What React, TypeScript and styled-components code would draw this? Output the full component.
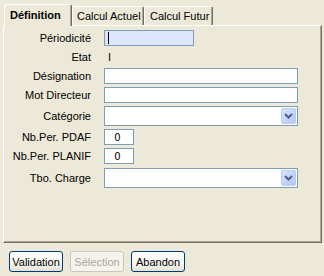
import React from "react";
import styled, { createGlobalStyle } from "styled-components";

const Global = createGlobalStyle`
  html, body { margin: 0; padding: 0; background: #ece9d8; }
  body { font-family: "Liberation Sans", Arial, sans-serif; font-size: 11px; color: #000; }
`;

const Window = styled.div`
  width: 324px;
  height: 276px;
  box-sizing: border-box;
  padding: 4px 2px 0 3px;
  background: #ece9d8;
  display: flex;
  flex-direction: column;
`;

const TabRow = styled.div`
  display: flex;
  align-items: flex-end;
  height: 21px;
  padding-left: 1px;
`;

const Tab = styled.div<{ $active?: boolean; $w: number; $pl: number }>`
  position: relative;
  z-index: ${(p) => (p.$active ? 2 : 1)};
  box-sizing: border-box;
  width: ${(p) => p.$w}px;
  height: ${(p) => (p.$active ? "22px" : "19px")};
  margin-bottom: ${(p) => (p.$active ? "-1px" : "0")};
  padding: 0 0 ${(p) => (p.$active ? "2px" : "0")} ${(p) => p.$pl}px;
  display: flex;
  align-items: center;
  background: #ece9d8;
  border-top: 1px solid #fff;
  border-left: 1px solid #fff;
  border-right: 1px solid #716f64;
  box-shadow: inset -1px 0 0 #aca899;
  border-radius: 2px 2px 0 0;
  font-weight: ${(p) => (p.$active ? "bold" : "normal")};
  white-space: nowrap;
`;

const Panel = styled.div`
  box-sizing: border-box;
  height: 218px;
  width: 319px;
  border-top: 1px solid #fff;
  border-left: 1px solid #fff;
  border-right: 1px solid #716f64;
  border-bottom: 1px solid #716f64;
  box-shadow: inset -1px -1px 0 #aca899;
  padding: 4px 0 0 0;
`;

const Form = styled.div`
  display: grid;
  grid-template-columns: 87px 194px;
  column-gap: 13px;
  row-gap: 3px;
  align-items: center;
`;

const Label = styled.div`
  text-align: right;
  white-space: nowrap;
`;

const Field = styled.div<{ $h: number }>`
  height: ${(p) => p.$h}px;
  display: flex;
  align-items: center;
`;

const TextBox = styled.div<{ $w?: number; $focus?: boolean; $center?: boolean }>`
  box-sizing: border-box;
  width: ${(p) => (p.$w ? `${p.$w}px` : "100%")};
  height: 16px;
  border: 1px solid #7f9db9;
  background: ${(p) => (p.$focus ? "#dce5fb" : "#fff")};
  display: flex;
  align-items: center;
  justify-content: ${(p) => (p.$center ? "center" : "flex-start")};
  padding-left: ${(p) => (p.$center ? "0" : "3px")};
  padding-right: ${(p) => (p.$center ? "3px" : "0")};
  font-family: "DejaVu Sans", sans-serif;
  font-size: 10px;
`;

const Caret = styled.span`
  width: 1px;
  height: 12px;
  background: #000;
`;

const StaticValue = styled.div`
  padding-left: 4px;
`;

const Select = styled.div`
  box-sizing: border-box;
  width: 100%;
  height: 20px;
  border: 1px solid #7f9db9;
  background: #fff;
  display: flex;
  justify-content: flex-end;
  padding: 1px;
`;

const DropBtn = styled.div`
  box-sizing: border-box;
  width: 15px;
  height: 16px;
  border: 1px solid #b9caf5;
  border-radius: 2px;
  background: linear-gradient(135deg, #d9e4fd 0%, #c1d2fa 60%, #b2c6f7 100%);
  display: flex;
  align-items: center;
  justify-content: center;
`;

const ButtonRow = styled.div`
  display: flex;
  gap: 7px;
  padding: 8px 0 0 6px;
`;

const Button = styled.div<{ $disabled?: boolean }>`
  box-sizing: border-box;
  height: 21px;
  width: 54px;
  border: 1px solid ${(p) => (p.$disabled ? "#c9c7ba" : "#003c74")};
  border-radius: 3px;
  background: ${(p) =>
    p.$disabled ? "#f4f3ee" : "linear-gradient(#ffffff 0%, #f6f5f1 60%, #e3e1d6 100%)"};
  color: ${(p) => (p.$disabled ? "#aca899" : "#000")};
  display: flex;
  align-items: center;
  justify-content: center;
  font-size: 11px;
  white-space: nowrap;
`;

const Chevron = () => (
  <svg width="9" height="6" viewBox="0 0 9 6">
    <path d="M1 1 L4.5 4.5 L8 1" fill="none" stroke="#4d6185" strokeWidth="2" />
  </svg>
);

export default function App() {
  return (
    <>
      <Global />
      <Window>
        <TabRow>
          <Tab $active $w={68} $pl={5}>Définition</Tab>
          <Tab $w={72} $pl={4}>Calcul Actuel</Tab>
          <Tab $w={69} $pl={5}>Calcul Futur</Tab>
        </TabRow>
        <Panel>
          <Form>
            <Label>Périodicité</Label>
            <Field $h={16}>
              <TextBox $w={90} $focus>
                <Caret />
              </TextBox>
            </Field>

            <Label>Etat</Label>
            <Field $h={16}>
              <StaticValue>I</StaticValue>
            </Field>

            <Label>Désignation</Label>
            <Field $h={16}>
              <TextBox />
            </Field>

            <Label>Mot Directeur</Label>
            <Field $h={16}>
              <TextBox />
            </Field>

            <Label>Catégorie</Label>
            <Field $h={20}>
              <Select>
                <DropBtn>
                  <Chevron />
                </DropBtn>
              </Select>
            </Field>

            <Label>Nb.Per. PDAF</Label>
            <Field $h={16}>
              <TextBox $w={30} $center>0</TextBox>
            </Field>

            <Label>Nb.Per. PLANIF</Label>
            <Field $h={16}>
              <TextBox $w={30} $center>0</TextBox>
            </Field>

            <Label>Tbo. Charge</Label>
            <Field $h={21}>
              <Select>
                <DropBtn>
                  <Chevron />
                </DropBtn>
              </Select>
            </Field>
          </Form>
        </Panel>
        <ButtonRow>
          <Button>Validation</Button>
          <Button $disabled>Sélection</Button>
          <Button>Abandon</Button>
        </ButtonRow>
      </Window>
    </>
  );
}
